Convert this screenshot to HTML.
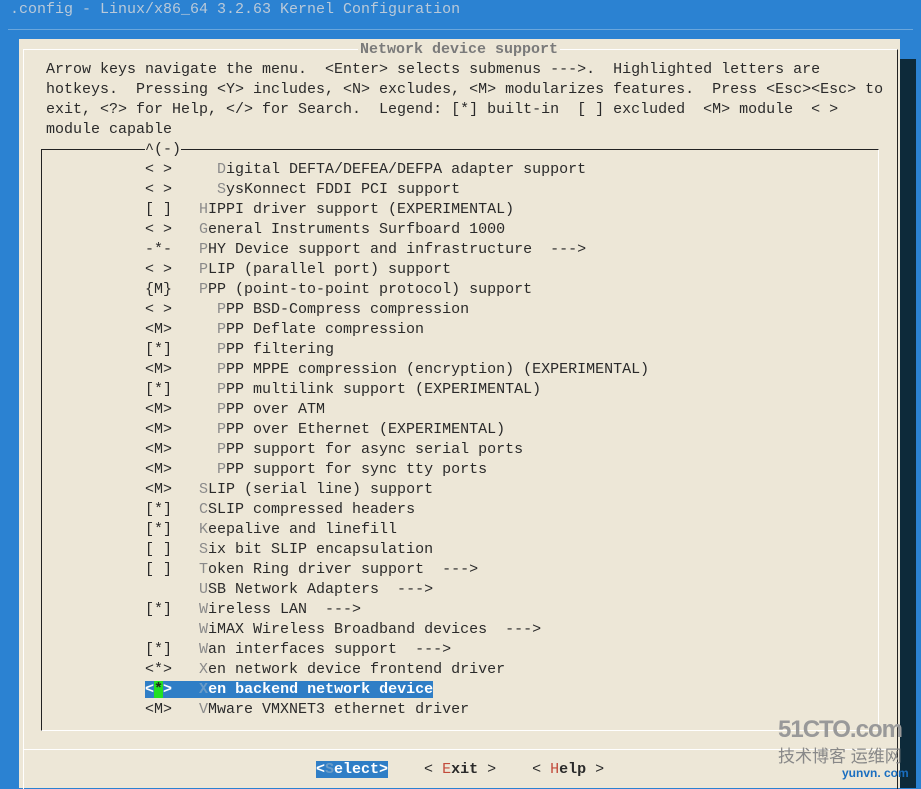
<!DOCTYPE html>
<html><head><meta charset="utf-8"><style>
body{margin:0;width:921px;height:788px;background:#2b82d2;overflow:hidden;position:relative;font-family:"Liberation Mono",monospace;font-size:15px;}
.t{position:absolute;white-space:pre;line-height:20px;}
#title{left:10px;top:0px;color:#b9c9d9;}
#tline{position:absolute;left:8px;top:29px;width:905px;height:1px;background:#6aa6dc;}
#shadow{position:absolute;left:900px;top:59px;width:16px;height:729px;background:#0d2a3a;}
#dlg{position:absolute;left:19px;top:39px;width:881px;height:749px;background:#ede7d7;}
#b1{position:absolute;left:23px;top:49px;width:873px;height:739px;border-top:1px solid #fff;border-left:1px solid #fff;border-right:1px solid #222;}
#menu{position:absolute;left:41px;top:149px;width:836px;height:580px;border-top:1px solid #222;border-left:1px solid #222;border-right:1px solid #fff;border-bottom:1px solid #fff;}
#sep{position:absolute;left:24px;top:749px;width:872px;height:1px;background:#fff;}
.txt{color:#2a2a2a;}
.h{color:#8a8a8a;}
#dtitle{left:358px;top:40px;color:#7a7a7a;font-weight:bold;background:#ede7d7;padding:0 2px;}
#arrow{left:145px;top:140px;color:#2a2a2a;background:#ede7d7;}
.sel{background:#2f7ec6;color:#fff;font-weight:bold;}
.g{background:#22e022;color:#222;}
.r{color:#c24a3a;}
</style></head><body>
<div class="t" id="title">.config - Linux/x86_64 3.2.63 Kernel Configuration</div>
<div id="tline"></div>
<div id="shadow"></div>
<div id="dlg"></div>
<div id="b1"></div>
<div id="menu"></div>
<div id="sep"></div>
<div class="t" id="dtitle">Network device support</div>
<div class="t txt" style="left:46px;top:60px">Arrow keys navigate the menu.  &lt;Enter&gt; selects submenus ---&gt;.  Highlighted letters are
hotkeys.  Pressing &lt;Y&gt; includes, &lt;N&gt; excludes, &lt;M&gt; modularizes features.  Press &lt;Esc&gt;&lt;Esc&gt; to
exit, &lt;?&gt; for Help, &lt;/&gt; for Search.  Legend: [*] built-in  [ ] excluded  &lt;M&gt; module  &lt; &gt;
module capable</div>
<div class="t" id="arrow">^(-)</div>
<div class="t txt" style="left:145px;top:160px">&lt; &gt;     <span class="h">D</span>igital DEFTA/DEFEA/DEFPA adapter support
&lt; &gt;     <span class="h">S</span>ysKonnect FDDI PCI support
[ ]   <span class="h">H</span>IPPI driver support (EXPERIMENTAL)
&lt; &gt;   <span class="h">G</span>eneral Instruments Surfboard 1000
-*-   <span class="h">P</span>HY Device support and infrastructure  ---&gt;
&lt; &gt;   <span class="h">P</span>LIP (parallel port) support
{M}   <span class="h">P</span>PP (point-to-point protocol) support
&lt; &gt;     <span class="h">P</span>PP BSD-Compress compression
&lt;M&gt;     <span class="h">P</span>PP Deflate compression
[*]     <span class="h">P</span>PP filtering
&lt;M&gt;     <span class="h">P</span>PP MPPE compression (encryption) (EXPERIMENTAL)
[*]     <span class="h">P</span>PP multilink support (EXPERIMENTAL)
&lt;M&gt;     <span class="h">P</span>PP over ATM
&lt;M&gt;     <span class="h">P</span>PP over Ethernet (EXPERIMENTAL)
&lt;M&gt;     <span class="h">P</span>PP support for async serial ports
&lt;M&gt;     <span class="h">P</span>PP support for sync tty ports
&lt;M&gt;   <span class="h">S</span>LIP (serial line) support
[*]   <span class="h">C</span>SLIP compressed headers
[*]   <span class="h">K</span>eepalive and linefill
[ ]   <span class="h">S</span>ix bit SLIP encapsulation
[ ]   <span class="h">T</span>oken Ring driver support  ---&gt;
      <span class="h">U</span>SB Network Adapters  ---&gt;
[*]   <span class="h">W</span>ireless LAN  ---&gt;
      <span class="h">W</span>iMAX Wireless Broadband devices  ---&gt;
[*]   <span class="h">W</span>an interfaces support  ---&gt;
&lt;*&gt;   <span class="h">X</span>en network device frontend driver
<span class="sel">&lt;<span class="g">*</span>&gt;   <span style="color:#6a9cc8">X</span>en backend network device</span>
&lt;M&gt;   <span class="h">V</span>Mware VMXNET3 ethernet driver</div>
<div class="t txt" style="left:316px;top:760px"><span class="sel">&lt;<span style="color:#6a9cc8">S</span>elect&gt;</span>    &lt; <span class="r">E</span><b>xit</b> &gt;    &lt; <span class="r">H</span><b>elp</b> &gt;</div>
<div class="t" style="left:778px;top:716px;font-family:'Liberation Sans',sans-serif;font-size:24px;font-weight:bold;color:#999;line-height:28px;letter-spacing:-1px">51CTO.com</div>
<div class="t" style="left:778px;top:746px;font-family:'Liberation Sans','Noto Sans CJK SC',sans-serif;font-size:17px;color:#888;line-height:22px">技术博客 运维网</div>
<div class="t" style="left:842px;top:766px;font-family:'Liberation Sans',sans-serif;font-size:12px;font-weight:bold;color:#1a6ec0;line-height:14px">yunvn. com</div>
</body></html>
